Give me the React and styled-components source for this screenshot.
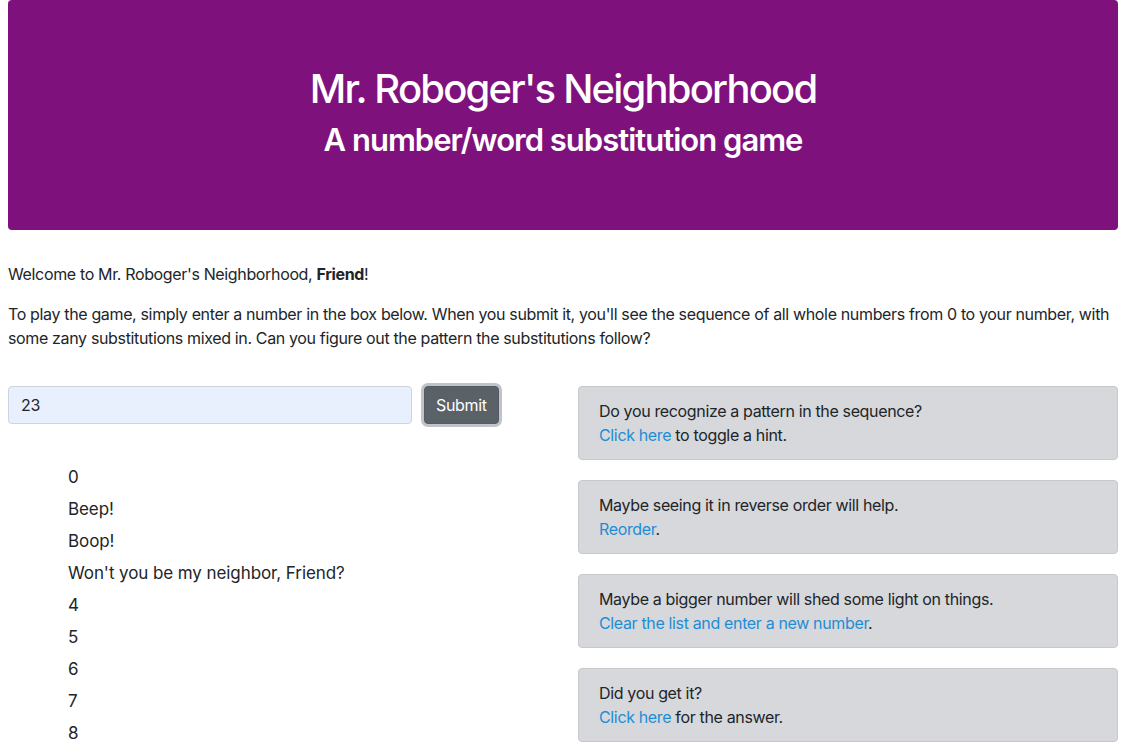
import React from 'react';
import styled, { createGlobalStyle } from 'styled-components';

const GlobalStyle = createGlobalStyle`
  body {
    margin: 0;
    font-family: Inter, "Liberation Sans", sans-serif;
    font-size: 16px;
    line-height: 1.5;
    letter-spacing: -0.022em;
    color: #212529;
    background: #fff;
  }
  * { box-sizing: border-box; }
`;

const Page = styled.div`
  width: 1110px;
  margin-left: 8px;
`;

const Jumbotron = styled.header`
  height: 230px;
  background-color: #7f117d;
  border-radius: 4px;
  color: #fff;
  text-align: center;
  padding-top: 65px;
  margin-bottom: 32px;
`;

const Title = styled.h1`
  margin: 0 0 8px;
  font-size: 40px;
  font-weight: 500;
  line-height: 1.2;
  letter-spacing: -0.045em;
`;

const Subtitle = styled.h2`
  margin: 0;
  font-size: 31px;
  font-weight: 600;
  line-height: 1.2;
  letter-spacing: -0.032em;
`;

const Para = styled.p`
  margin: 0 0 16px;
`;

const Row = styled.div`
  display: grid;
  grid-template-columns: 540px 540px;
  column-gap: 30px;
  margin-top: 36px;
  align-items: start;
`;

const Form = styled.form`
  display: flex;
  align-items: center;
  gap: 12px;
  margin: 0;
`;

const Input = styled.input`
  width: 404px;
  height: 38px;
  padding: 6px 12px;
  font: inherit;
  letter-spacing: inherit;
  color: #212529;
  background: #e8f0fe;
  border: 1px solid #ced4da;
  border-radius: 4px;
  outline: none;
`;

const Button = styled.button`
  height: 38px;
  padding: 6px 11px;
  font: inherit;
  letter-spacing: inherit;
  color: #fff;
  background: #5a6268;
  border: 1px solid #545b62;
  border-radius: 4px;
  box-shadow: 0 0 0 3px rgba(130, 138, 145, 0.5);
`;

const Sequence = styled.ul`
  list-style: none;
  margin: 41px 0 0;
  padding-left: 60px;
`;

const Item = styled.li`
  font-size: 17px;
  line-height: 24px;
  margin-bottom: 8px;
  letter-spacing: -0.005em;
`;

const Hints = styled.div`
  display: flex;
  flex-direction: column;
  gap: 20px;
`;

const Hint = styled.div`
  padding: 12px 20px;
  background: #d6d8db;
  border: 1px solid #c6c8ca;
  border-radius: 4px;
  color: #212529;
`;

const Link = styled.a`
  color: #1e8dd6;
  text-decoration: none;
  cursor: pointer;
`;

const sequence = ['0', 'Beep!', 'Boop!', "Won't you be my neighbor, Friend?", '4', '5', '6', '7', '8'];

export default function App() {
  return (
    <Page>
      <GlobalStyle />
      <Jumbotron>
        <Title>Mr. Roboger's Neighborhood</Title>
        <Subtitle>A number/word substitution game</Subtitle>
      </Jumbotron>
      <Para>Welcome to Mr. Roboger's Neighborhood, <strong>Friend</strong>!</Para>
      <Para>
        To play the game, simply enter a number in the box below. When you submit it, you'll see the sequence of all whole
        numbers from 0 to your number, with some zany substitutions mixed in. Can you figure out the pattern the
        substitutions follow?
      </Para>
      <Row>
        <div>
          <Form onSubmit={e => e.preventDefault()}>
            <Input type="text" defaultValue="23" />
            <Button type="submit">Submit</Button>
          </Form>
          <Sequence>
            {sequence.map((s, i) => <Item key={i}>{s}</Item>)}
          </Sequence>
        </div>
        <Hints>
          <Hint>
            Do you recognize a pattern in the sequence?<br />
            <Link>Click here</Link> to toggle a hint.
          </Hint>
          <Hint>
            Maybe seeing it in reverse order will help.<br />
            <Link>Reorder</Link>.
          </Hint>
          <Hint>
            Maybe a bigger number will shed some light on things.<br />
            <Link>Clear the list and enter a new number</Link>.
          </Hint>
          <Hint>
            Did you get it?<br />
            <Link>Click here</Link> for the answer.
          </Hint>
        </Hints>
      </Row>
    </Page>
  );
}
